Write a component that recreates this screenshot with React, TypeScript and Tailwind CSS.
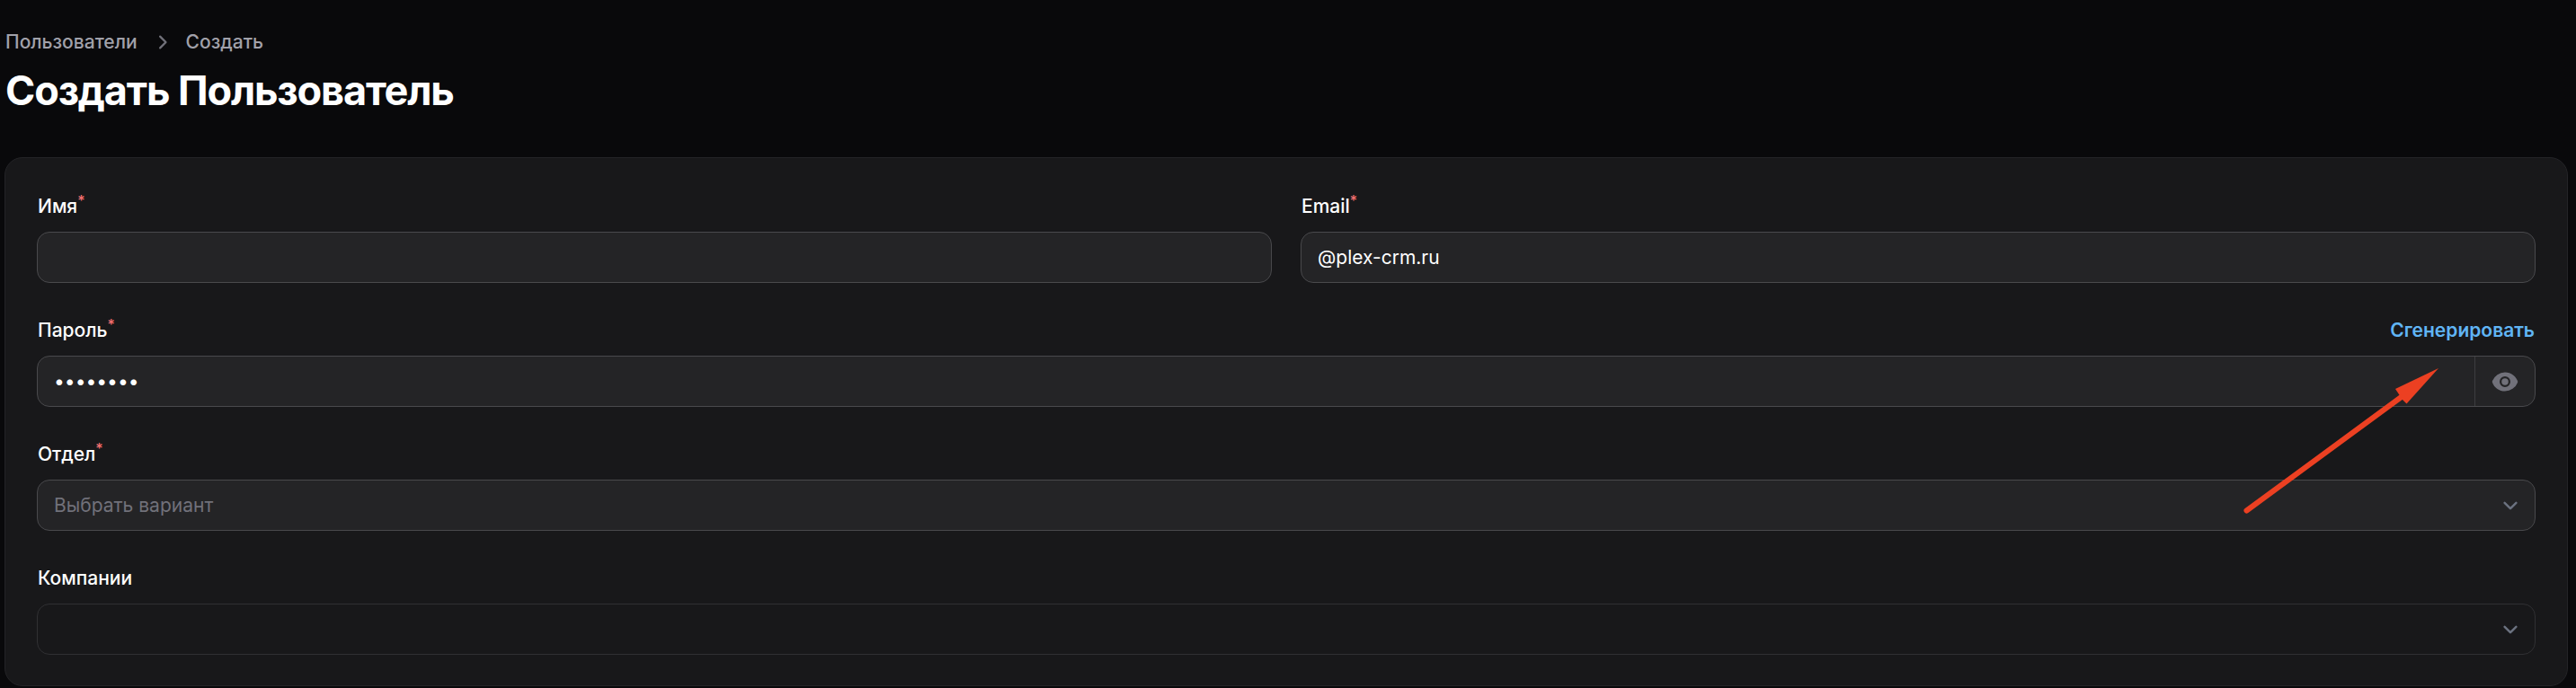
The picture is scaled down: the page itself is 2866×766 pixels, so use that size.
import type { ReactNode } from "react";
import { HiMiniChevronRight, HiMiniEye } from "react-icons/hi2";

const frame = "h-[57px] w-full rounded-[14px] border";
const filled = "border-[#49494c] bg-[#242426]";

function Field({
  id,
  label,
  required = false,
  action,
  children,
}: {
  id: string;
  label: string;
  required?: boolean;
  action?: ReactNode;
  children: ReactNode;
}) {
  return (
    <div className="flex min-w-0 flex-col gap-[9px]">
      <div className="flex h-[38px] items-center justify-between px-px">
        <label htmlFor={id} className="font-medium text-white">
          {label}
          {required && <sup className="text-base leading-none text-[#f87171]">*</sup>}
        </label>
        {action}
      </div>
      {children}
    </div>
  );
}

function SelectBox({ id, placeholder, muted = false }: { id: string; placeholder: string; muted?: boolean }) {
  return (
    <div className="relative">
      <select
        id={id}
        defaultValue=""
        disabled={muted}
        className={`${frame} ${
          muted ? "border-[#303033] bg-transparent" : filled
        } block appearance-none pr-14 pl-[18px] text-[#71717a] opacity-100 outline-none`}
      >
        <option value="">{placeholder}</option>
      </select>
      <svg
        viewBox="0 0 20 20"
        fill="none"
        aria-hidden="true"
        className="pointer-events-none absolute inset-y-0 right-3 my-auto size-8"
      >
        <path d="M6 8l4 4 4-4" stroke="#6b7280" strokeWidth="1.5" strokeLinecap="round" strokeLinejoin="round" />
      </svg>
    </div>
  );
}

export default function App() {
  return (
    <main className="relative min-h-screen bg-[#09090b] pt-8 pr-[9px] pl-[5px] font-['Inter','Noto_Sans',sans-serif] text-[21px] leading-[30px] text-white">
      <header className="mb-[47px] pl-px">
        <nav aria-label="Навигация" className="mb-3 flex items-center gap-3 font-medium text-[#a1a1aa]">
          <a href="#users">Пользователи</a>
          <HiMiniChevronRight className="size-[30px] text-[#71717a]" aria-hidden="true" />
          <a href="#create">Создать</a>
        </nav>
        <h1 className="text-[45px] leading-[54px] font-bold tracking-tight">Создать Пользователь</h1>
      </header>

      <form className="grid grid-cols-2 gap-x-8 gap-y-[34px] rounded-[20px] border border-[#242427] bg-[#18181a] px-[35px] pt-[35px] pb-[34px]">
        <Field id="name" label="Имя" required>
          <input id="name" type="text" className={`${frame} ${filled} px-[18px] outline-none`} />
        </Field>
        <Field id="email" label="Email" required>
          <input
            id="email"
            type="text"
            defaultValue="@plex-crm.ru"
            className={`${frame} ${filled} px-[18px] outline-none`}
          />
        </Field>
        <div className="col-span-2">
          <Field
            id="password"
            label="Пароль"
            required
            action={
              <button type="button" className="font-semibold text-[#60b5f5]">
                Сгенерировать
              </button>
            }
          >
            <div className={`${frame} ${filled} flex overflow-hidden`}>
              <input
                id="password"
                type="password"
                defaultValue="password"
                className="min-w-0 flex-1 bg-transparent px-[18px] outline-none"
              />
              <button
                type="button"
                aria-label="Показать пароль"
                className="flex w-[67px] items-center justify-center border-l border-[#3d3d40] text-[#71717a]"
              >
                <HiMiniEye className="size-[30px]" />
              </button>
            </div>
          </Field>
        </div>
        <div className="col-span-2">
          <Field id="department" label="Отдел" required>
            <SelectBox id="department" placeholder="Выбрать вариант" />
          </Field>
        </div>
        <div className="col-span-2">
          <Field id="companies" label="Компании">
            <SelectBox id="companies" placeholder="" muted />
          </Field>
        </div>
      </form>

      <svg
        viewBox="0 0 220 166"
        aria-hidden="true"
        className="pointer-events-none absolute top-[408px] right-[151px] h-[166px] w-[220px]"
      >
        <path d="M4.500 160.500L178 33" stroke="#ec4022" strokeWidth="6" strokeLinecap="round" />
        <path d="M218 2L182.500 41.500L178 37L174 31L170 25Z" fill="#ec4022" />
      </svg>
    </main>
  );
}
